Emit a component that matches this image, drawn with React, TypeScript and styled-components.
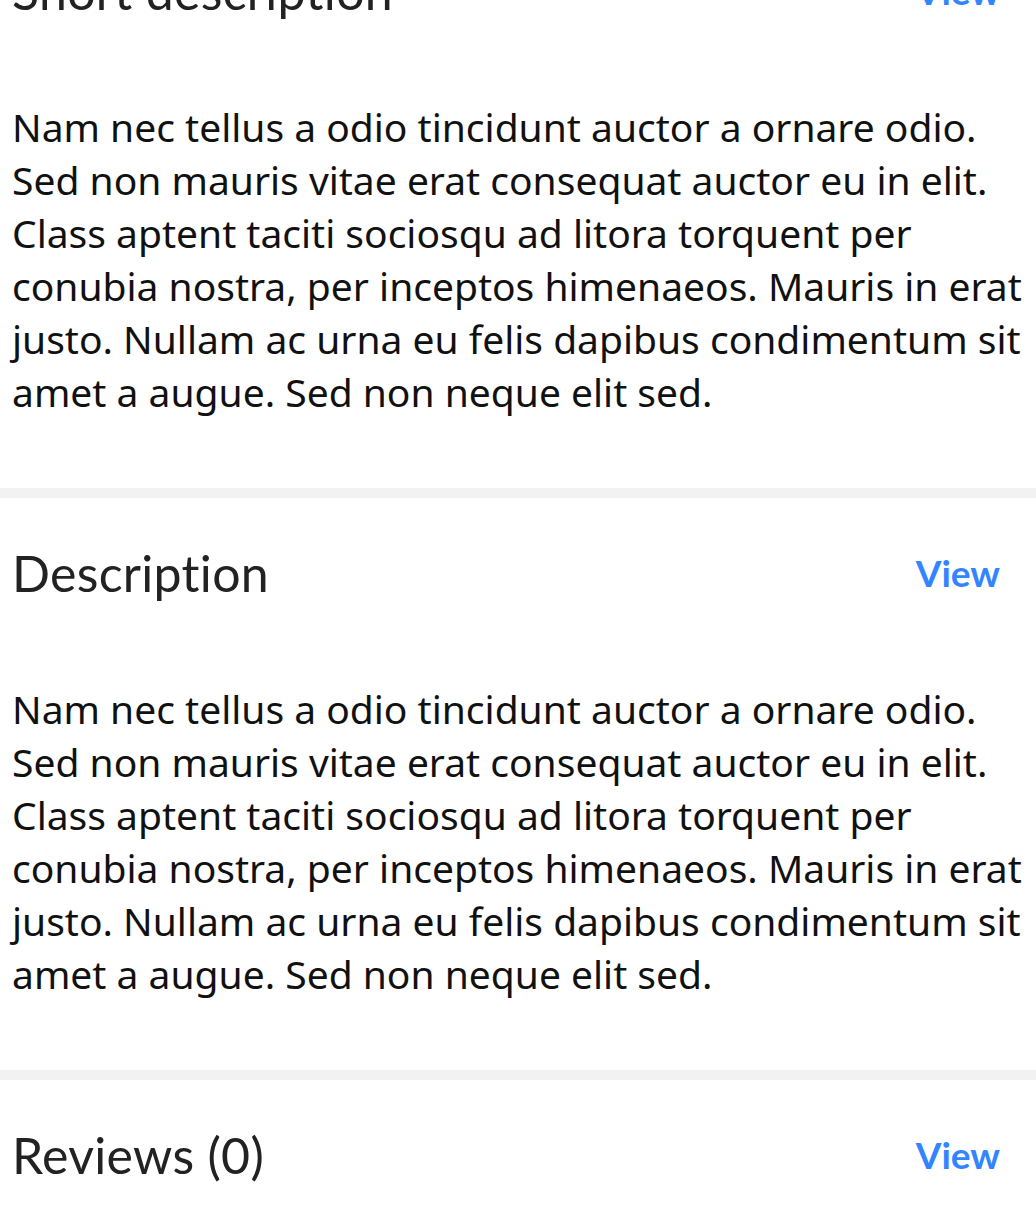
import React from "react";
import styled, { createGlobalStyle } from "styled-components";

const Global = createGlobalStyle`
  html, body { margin: 0; padding: 0; background: #ffffff; }
  body { overflow: hidden; }
`;

const Page = styled.div`
  margin-top: -84px;
  display: flex;
  flex-direction: column;
`;

const Section = styled.section`
  display: flex;
  flex-direction: column;
  border-bottom: 10px solid #f2f2f2;
`;

const Header = styled.div`
  display: flex;
  align-items: center;
  justify-content: space-between;
  padding: 46px 36px 2px 12px;
`;

const Title = styled.h2`
  margin: 0;
  font-family: Lato, "Noto Sans", sans-serif;
  font-weight: 400;
  font-size: 50px;
  letter-spacing: 0.3px;
  line-height: 58px;
  color: #222222;
`;

const ViewLink = styled.a`
  font-family: Lato, "Noto Sans", sans-serif;
  font-weight: 700;
  font-size: 37px;
  line-height: 58px;
  color: #3385ff;
  text-decoration: none;
`;

const Body = styled.p`
  margin: 0;
  padding: 78px 8px 70px 12px;
  font-family: "Noto Sans", "Open Sans", sans-serif;
  font-size: 39px;
  line-height: 53px;
  color: #111111;
`;

const lorem =
  "Nam nec tellus a odio tincidunt auctor a ornare odio. Sed non mauris vitae erat consequat auctor eu in elit. Class aptent taciti sociosqu ad litora torquent per conubia nostra, per inceptos himenaeos. Mauris in erat justo. Nullam ac urna eu felis dapibus condimentum sit amet a augue. Sed non neque elit sed.";

const sections = [
  { title: "Short description", body: lorem },
  { title: "Description", body: lorem },
  { title: "Reviews (0)", body: "" },
];

export default function App() {
  return (
    <>
      <Global />
      <Page>
        {sections.map((s) => (
          <Section key={s.title}>
            <Header>
              <Title>{s.title}</Title>
              <ViewLink href="#">View</ViewLink>
            </Header>
            {s.body ? <Body>{s.body}</Body> : <Body as="div" />}
          </Section>
        ))}
      </Page>
    </>
  );
}
